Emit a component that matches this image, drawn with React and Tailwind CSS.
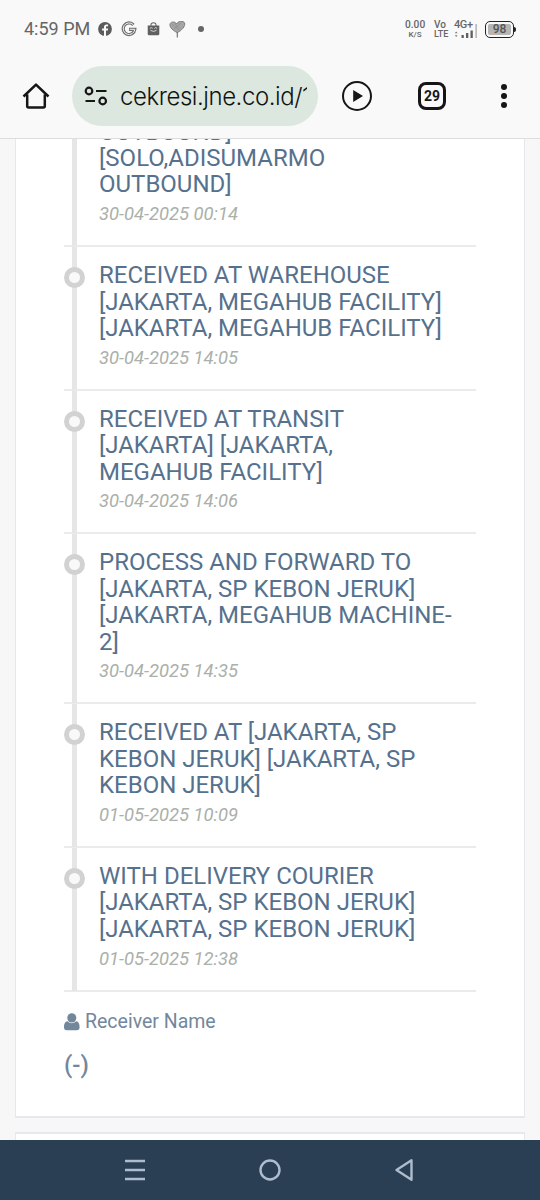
const history = [
    {
        lines: ['OUTBOUND]', '[SOLO,ADISUMARMO', 'OUTBOUND]'],
        date: '30-04-2025 00:14',
    },
    {
        lines: ['RECEIVED AT WAREHOUSE', '[JAKARTA, MEGAHUB FACILITY]', '[JAKARTA, MEGAHUB FACILITY]'],
        date: '30-04-2025 14:05',
    },
    {
        lines: ['RECEIVED AT TRANSIT', '[JAKARTA] [JAKARTA,', 'MEGAHUB FACILITY]'],
        date: '30-04-2025 14:06',
    },
    {
        lines: ['PROCESS AND FORWARD TO', '[JAKARTA, SP KEBON JERUK]', '[JAKARTA, MEGAHUB MACHINE-', '2]'],
        date: '30-04-2025 14:35',
    },
    {
        lines: ['RECEIVED AT [JAKARTA, SP', 'KEBON JERUK] [JAKARTA, SP', 'KEBON JERUK]'],
        date: '01-05-2025 10:09',
    },
    {
        lines: ['WITH DELIVERY COURIER', '[JAKARTA, SP KEBON JERUK]', '[JAKARTA, SP KEBON JERUK]'],
        date: '01-05-2025 12:38',
    },
];

const StatusBar = () => (
    <div className="flex h-[58px] items-center pl-6 pr-[24px] text-[#666]">
        <span className="w-[74px] whitespace-nowrap text-[18px] leading-none">4:59 PM</span>
        {/* Facebook */}
        <svg width="14" height="14" viewBox="0 0 14 14">
            <circle cx="7" cy="7" r="6.9" fill="#5c5c5c" />
            <path d="M6 14V8.6H4.1V6.5H6V5.2C6 3.3 7 2.4 8.6 2.4h1.5v1.9H9c-.7 0-1 .4-1 1v1.2h2.1l-.3 2.1H8V14z" fill="#fafafa" />
        </svg>
        {/* Google */}
        <svg className="ml-[9px]" width="16" height="16" viewBox="0 0 16 16" fill="none">
            <path d="M12.4 3.9A5.8 5.8 0 1 0 13.8 8.3H8" stroke="#707070" strokeWidth="3.2" />
            <path d="M12.1 3.6A5.8 5.8 0 1 0 13.8 8.3H8.8" stroke="#f4f4f4" strokeWidth="1" />
        </svg>
        {/* Shopping bag */}
        <svg className="ml-[10px]" width="13" height="14" viewBox="0 0 13 15">
            <path d="M3.8 4.2V3a2.7 2.2 0 0 1 5.4 0v1.2" fill="none" stroke="#666" strokeWidth="1.1" />
            <path d="M.3 3.8h12.4v9a1.5 1.5 0 0 1-1.5 1.5H1.8a1.5 1.5 0 0 1-1.5-1.5z" fill="#606060" />
            <path d="M2.6 6.8q1.5-1.5 3 0M7.4 6.8q1.5-1.5 3 0M3.3 9q3.2 2.2 6.4 0" fill="none" stroke="#ddd" strokeWidth="1" />
        </svg>
        {/* Heart */}
        <svg className="ml-[9px]" width="17" height="17" viewBox="0 0 17 17">
            <path d="M8.3 11.6C4.2 9.8.8 6.7.9 3.7 1 .6 5.8-.1 7.6 3 9-.3 14.2-.2 15.5 1.7c1.3 3.6-3 7.9-7.2 9.9z" fill="#a6a6a6" stroke="#777" strokeWidth=".9" />
            <path d="M8.3 11v5.5" stroke="#777" strokeWidth="1.2" />
            <path d="M3 3l7 6M6 3l5 4.5M5 8l7-6" stroke="#8c8c8c" strokeWidth=".7" />
        </svg>
        <span className="ml-[12px] size-[6px] rounded-full bg-[#666]" />
        <div className="ml-auto flex items-center font-medium">
            <div className="w-5 text-center">
                <div className="text-[10.2px] leading-[10px]">0.00</div>
                <div className="text-[8px] leading-[9px]">K/S</div>
            </div>
            <div className="ml-[9px] w-[15px] whitespace-nowrap">
                <div className="text-[10px] leading-[10px]">Vo</div>
                <div className="text-[9px] leading-[9px]">LTE</div>
            </div>
            <div className="ml-[5px] w-[24px]">
                <div className="h-[9px] whitespace-nowrap text-[11px] leading-[9px] tracking-[-0.4px]">4G+</div>
                <svg className="-mt-[5px] block" width="24" height="15" viewBox="0 0 24 15">
                    <path d="M.8 9.3 2.2 7.5 3.6 9.3zM.8 11.2 2.2 13 3.6 11.2z" fill="#777" />
                    <path d="M7.5 11h2.3v3H7.5zM12 9h2.3v5H12zM16.5 6.5h2.3V14h-2.3z" fill="#606060" />
                    <path d="M21.3 0h1.7v14h-1.7z" fill="#bbb" />
                </svg>
            </div>
            <div className="ml-[7px] flex items-center">
                <div className="flex h-[17px] w-[29px] rounded-[5px] border border-[#222] p-[2px]">
                    <div className="flex flex-1 items-center justify-center rounded-[2px] bg-[#b5b5b5] text-[12px] leading-none text-[#555]">98</div>
                </div>
                <span className="h-[5px] w-[2px] rounded-r bg-[#222]" />
            </div>
        </div>
    </div>
);

const AddressBar = () => (
    <div className="flex h-[80px] items-start pt-2 text-[#161616]">
        <svg className="ml-[22px] mt-[16px] shrink-0" width="28" height="28" viewBox="0 0 28 28" fill="none" stroke="currentColor" strokeWidth="2.5">
            <path d="M1.5 14.5 14 2.6 26.5 14.5M5.2 12.5v11.6q0 1.4 1.4 1.4h14.8q1.4 0 1.4-1.4V12.5" strokeLinejoin="round" />
        </svg>
        <div className="ml-[22px] flex h-[60px] w-[246px] shrink-0 items-center rounded-full bg-[#dce8df] pl-[12px] pr-[11px]">
            <svg className="shrink-0" width="24" height="22" viewBox="0 0 24 22" fill="none" stroke="currentColor" strokeWidth="2.2">
                <circle cx="5" cy="6" r="3.3" />
                <path d="M12 6h10.5M1.5 16h9.5" />
                <circle cx="18.7" cy="16" r="3.3" />
            </svg>
            <div className="ml-[12px] flex-1 overflow-hidden whitespace-nowrap pt-px font-[Inter] text-[24px] font-light leading-[32px] tracking-[-0.45px] text-[#111412]">cekresi.jne.co.id/1</div>
        </div>
        <svg className="ml-[23px] mt-[14px] shrink-0" width="32" height="32" viewBox="0 0 32 32">
            <circle cx="16" cy="16" r="14" fill="none" stroke="currentColor" strokeWidth="2" />
            <path d="M12.2 10v12l9.8-6z" fill="currentColor" />
        </svg>
        <div className="ml-[45px] mt-[16px] flex h-[28px] w-[28px] shrink-0 items-center justify-center rounded-[8px] border-[3px] border-current text-[14px] font-bold leading-none">29</div>
        <div className="ml-[55px] mt-[18px] flex flex-col gap-[3px]">
            <span className="size-[6px] rounded-full bg-current" />
            <span className="size-[6px] rounded-full bg-current" />
            <span className="size-[6px] rounded-full bg-current" />
        </div>
    </div>
);

const HistoryItem = ({ item, marker }) => (
    <li className="relative border-b-2 border-[#ebebed] pb-[19.9px] pl-[35px] pt-[15px]">
        <span className="absolute -bottom-px left-[8px] top-0 w-[5px] bg-[#e6e6e6]" />
        {marker && (
            <span className="absolute left-0 top-[20px] size-[21px] rounded-full border-[5px] border-[#d2d2d2] bg-[#f9f9f9]" />
        )}
        <h4 className="whitespace-nowrap text-[24px] leading-[26.4px] text-[#56718d]">
            {item.lines.map((line, i) => (
                <div key={i}>{line}</div>
            ))}
        </h4>
        <p className="mt-[5.5px] text-[18.4px] italic leading-[22px] text-[#aab0aa]">{item.date}</p>
    </li>
);

const NavBar = () => (
    <div className="flex h-[60px] items-center justify-between bg-[#2a3e54] pl-[124px] pr-[126px]">
        <svg width="22" height="24" viewBox="0 0 22 24" stroke="#aebdcd" strokeWidth="2.6">
            <path d="M1 3h20M1 12h20M1 21h20" />
        </svg>
        <svg width="24" height="24" viewBox="0 0 24 24" fill="none" stroke="#aebdcd" strokeWidth="2.4">
            <circle cx="12" cy="12" r="9.5" />
        </svg>
        <svg width="20" height="24" viewBox="0 0 20 24" fill="none" stroke="#aebdcd" strokeWidth="2.4" strokeLinejoin="round">
            <path d="M17.5 2.3v19.4L2.5 12z" />
        </svg>
    </div>
);

const App = () => (
    <div className="flex h-[1200px] w-[540px] flex-col overflow-hidden bg-[#f7f7f7] font-[Roboto,sans-serif]">
        <header className="h-[139px] shrink-0 border-b border-[#dedede] bg-[#f9f9f9]">
            <StatusBar />
            <AddressBar />
        </header>

        <main className="flex-1 overflow-hidden px-[15px]">
            <section className="h-[979px] overflow-hidden border-x border-b-2 border-[#e6e8ec] bg-white px-[48px]">
                <ul className="-mt-[35.5px]">
                    {history.map((item, i) => (
                        <HistoryItem key={item.date} item={item} marker={i > 0} />
                    ))}
                </ul>
                <div className="mt-[17px] flex items-center text-[#73879c]">
                    <svg width="16" height="18" viewBox="0 0 16 18" fill="currentColor">
                        <ellipse cx="7.8" cy="4.9" rx="4.5" ry="4.7" />
                        <path d="M3.3 8.3Q7.8 12.4 12.3 8.3C15 8.8 15.6 11.5 15.6 14.3Q15.6 17.3 12.8 17.3H2.8Q0 17.3 0 14.3C0 11.5.6 8.8 3.3 8.3z" />
                    </svg>
                    <span className="ml-[5px] text-[19.5px] leading-[26px]">Receiver Name</span>
                </div>
                <div className="mt-[15px] text-[24px] font-medium leading-[30px] text-[#73879c]">(-)</div>
            </section>
            <section className="mt-[14px] h-10 border-x border-t-2 border-[#e6e8ec] bg-white" />
        </main>

        <NavBar />
    </div>
);

export default App;
